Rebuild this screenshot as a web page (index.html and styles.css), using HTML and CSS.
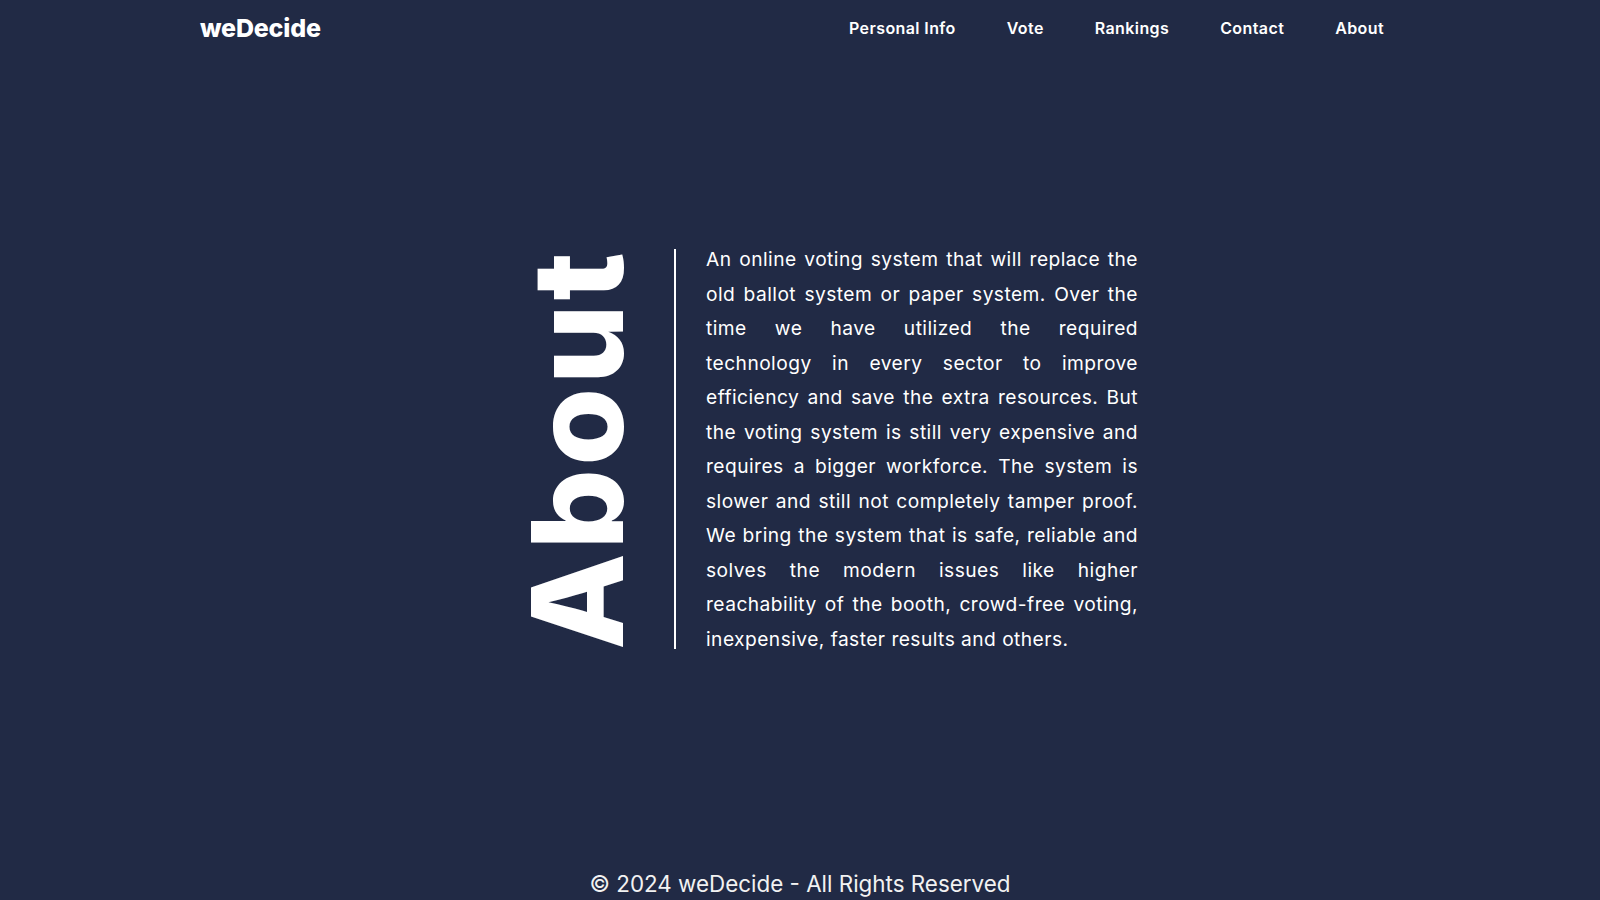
FILE: index.html
```html
<!DOCTYPE html>
<html lang="en">
<head>
<meta charset="utf-8">
<title>weDecide - About</title>
<link rel="stylesheet" href="styles.css">
</head>
<body>
<header class="topbar">
  <a class="logo" href="#">weDecide</a>
  <nav class="nav">
    <a href="#">Personal Info</a>
    <a href="#">Vote</a>
    <a href="#">Rankings</a>
    <a href="#">Contact</a>
    <a href="#">About</a>
  </nav>
</header>
<main class="main">
  <section class="about">
    <div class="about-title-wrap">
      <h1 class="about-title">About</h1>
    </div>
    <p class="about-text">
      <span class="ln">An online voting system that will replace the</span>
      <span class="ln">old ballot system or paper system. Over the</span>
      <span class="ln">time we have utilized the required</span>
      <span class="ln">technology in every sector to improve</span>
      <span class="ln">efficiency and save the extra resources. But</span>
      <span class="ln">the voting system is still very expensive and</span>
      <span class="ln">requires a bigger workforce. The system is</span>
      <span class="ln">slower and still not completely tamper proof.</span>
      <span class="ln">We bring the system that is safe, reliable and</span>
      <span class="ln">solves the modern issues like higher</span>
      <span class="ln">reachability of the booth, crowd-free voting,</span>
      <span class="ln last">inexpensive, faster results and others.</span>
    </p>
  </section>
</main>
<footer class="footer">© 2024 weDecide - All Rights Reserved</footer>
</body>
</html>
```
FILE: styles.css
```css
* { box-sizing: border-box; }
html, body { margin: 0; padding: 0; }
body {
  background: #212a45;
  color: #ffffff;
  font-family: Inter, "Open Sans", sans-serif;
  width: 1600px;
  height: 900px;
  overflow: hidden;
}
a { color: inherit; text-decoration: none; }

.topbar {
  height: 55px;
  display: flex;
  align-items: center;
  justify-content: space-between;
  padding: 0 216px 0 200px;
}
.logo {
  font-size: 25px;
  font-weight: 800;
  letter-spacing: -0.2px;
}
.nav {
  display: flex;
  gap: 51px;
}
.nav a {
  font-size: 16px;
  font-weight: 600;
  letter-spacing: 0.4px;
}

.main {
  height: 788px;
  display: flex;
  align-items: center;
  justify-content: center;
}
.about {
  display: flex;
  align-items: center;
}
.about-title-wrap {
  width: 214px;
  height: 400px;
  border-right: 2px solid #ffffff;
  display: flex;
  justify-content: flex-end;
  align-items: center;
  padding-right: 34px;
}
.about-title {
  margin: 0;
  writing-mode: vertical-rl;
  transform: rotate(180deg);
  font-size: 126px;
  font-weight: 800;
  line-height: 1;
  letter-spacing: 3.5px;
}
.about-text {
  width: 432px;
  margin: 0 0 0 30px;
  font-size: 19.2px;
  line-height: 34.5px;
  letter-spacing: 0.45px;
}
.ln {
  display: block;
  white-space: nowrap;
  text-align: justify;
  text-align-last: justify;
}
.ln.last {
  text-align-last: left;
}

.footer {
  text-align: center;
  font-size: 22.4px;
  line-height: 33px;
  padding: 24px 0;
  color: #f2f2f2;
}
```
